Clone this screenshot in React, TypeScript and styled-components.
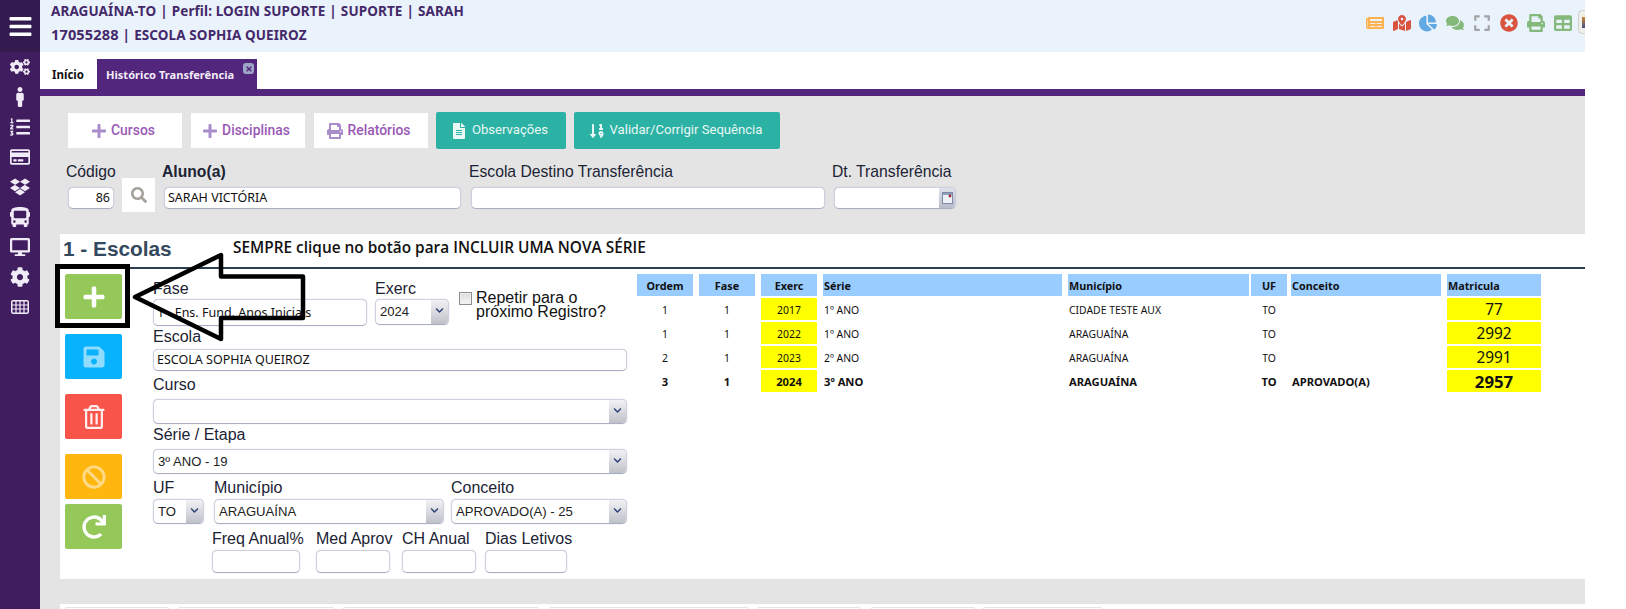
import React from "react";
import styled, { createGlobalStyle } from "styled-components";
import {
  FaBan, FaBars, FaBus, FaChartPie, FaCog, FaCogs, FaComments, FaDesktop, FaDropbox, FaExpand,
  FaFileAlt, FaListOl, FaMale, FaMapMarkedAlt, FaNewspaper, FaPlus, FaPrint, FaRedo, FaRegCreditCard,
  FaRegTrashAlt, FaSave, FaSearch, FaSortNumericDown, FaTable, FaTimes, FaTimesCircle, FaChevronDown,
} from "react-icons/fa";

const Global = createGlobalStyle`
  html, body { margin: 0; padding: 0; background: #fff; overflow: hidden; }
  * { box-sizing: border-box; }
  body { font-family: "Liberation Sans", Arial, sans-serif; }
`;

const Page = styled.div`
  display: flex; width: 1585px; height: 609px; overflow: visible;
`;
const Sidebar = styled.aside`
  width: 40px; flex: none; background: #3f1d5f; display: flex; flex-direction: column; color: #fff;
`;
const MenuTop = styled.div`
  height: 52px; background: #331a4f; display: flex; align-items: center; justify-content: center; font-size: 25px;
`;
const MenuItem = styled.div`
  height: 30px; display: flex; align-items: center; justify-content: center; font-size: 20px; color: #f1ebf7;
`;
const Main = styled.div`
  flex: 1; min-width: 0; display: flex; flex-direction: column;
`;
const Header = styled.header`
  height: 52px; background: #eaf2fb; display: flex; justify-content: space-between; padding-left: 11px;
`;
const HeaderInfo = styled.div`
  font-family: "Noto Sans", sans-serif; font-weight: 700; font-size: 13.5px; line-height: 23px; color: #44296a; letter-spacing: .1px;
`;
const Sep = styled.span`
  margin: 0 4px;
`;
const Digits = styled.span`
  font-size: 14.6px;
`;
const HeaderIcons = styled.div`
  display: flex; align-items: flex-start; overflow: hidden; padding-top: 14px;
`;
const HeadIcon = styled.span<{ $c: string; $w: number }>`
  width: ${p => p.$w}px; flex: none; display: flex; justify-content: center; font-size: 18px; color: ${p => p.$c}; height: 17px; align-items: center;
`;
const Avatar = styled.span`
  width: 7px; height: 24px; margin-top: -4px; flex: none; margin-left: 2px; border: 1px solid #cfcfcf; border-right: 0; border-radius: 5px 0 0 5px; background: #f1efe9; padding: 6px 0 0 3px;
  &::after { content: ""; display: block; width: 4px; height: 11px; background: linear-gradient(#c9852f, #44508a); }
`;
const Tabs = styled.nav`
  height: 37px; background: #fff; padding-top: 7px; display: flex; align-items: stretch;
`;
const HomeTab = styled.div`
  width: 57px; font: 700 11.5px "Noto Sans", sans-serif; color: #111; display: flex; align-items: center; padding-left: 12px;
`;
const ActiveTab = styled.div`
  position: relative; width: 160px; background: #52267d; color: #f3edf8; font: 700 11.1px "Noto Sans", sans-serif; display: flex; align-items: center; padding-left: 9px;
`;
const TabClose = styled.span`
  position: absolute; top: 4px; right: 3px; width: 11px; height: 11px; border-radius: 3px; background: #9da6c6; color: #52267d; font-size: 8px; display: flex; align-items: center; justify-content: center;
`;
const PurpleBar = styled.div` height: 7px; background: #52267d; `;
const Work = styled.main`
  flex: 1; min-height: 0; background: #e4e4e4; padding: 16px 0 0 20px; display: flex; flex-direction: column;
`;
const Toolbar = styled.div`
  display: flex; gap: 9px; align-items: center; margin-left: 8px; height: 37px;
`;
const LightButton = styled.button`
  width: 114px; height: 35px; border: 0; background: #fff; color: #9b59b6; font: 500 13.9px Roboto, sans-serif; display: flex; align-items: center; justify-content: center; gap: 4px; padding: 0 4px 2px 0;
  svg { color: #a98dcb; font-size: 16px; margin-top: 2px; }
`;
const TealButton = styled.button<{ $w: number }>`
  width: ${p => p.$w}px; height: 37px; margin-left: -1px; border: 0; border-radius: 2px; background: #2bb2a4; color: #e9f7f5; font: 400 13.1px Roboto, sans-serif; display: flex; align-items: center; justify-content: center; gap: 5px; padding: 0 3px 2px 0;
  svg { font-size: 16px; margin-top: 2px; }
`;
const TopRow = styled.div`
  display: flex; align-items: flex-start; margin: 13px 0 0 7px; height: 50px;
`;
const Field = styled.div<{ $w: number; $ml?: number }>`
  width: ${p => p.$w}px; margin-left: ${p => p.$ml ?? 0}px; flex: none;
`;
const Label = styled.label<{ $gap?: number; $bold?: boolean }>`
  display: block; height: 18px; line-height: 20px; font-size: 16px; white-space: nowrap; color: #1b2334; font-weight: ${p => (p.$bold ? 700 : 400)}; margin-bottom: ${p => p.$gap ?? 3}px;
`;
const TopLabel = styled(Label)`
  font-size: 15.7px; margin-left: -2px;
`;
const TextBox = styled.div<{ $h?: number; $right?: boolean }>`
  height: ${p => p.$h ?? 22}px; background: #fff; border: 1px solid #ced1dd; border-bottom-color: #aaaec5; border-radius: 5px; box-shadow: 0 0 1px #b0b4ca;
  font: 12.5px/1 "Noto Sans", sans-serif; color: #111; display: flex; align-items: center; padding: 1px 3px 0; white-space: nowrap; overflow: hidden;
  justify-content: ${p => (p.$right ? "flex-end" : "flex-start")};
`;
const DateBox = styled(TextBox)`
  padding: 0; justify-content: flex-end;
`;
const CalCell = styled.span`
  width: 16px; height: 100%; background: linear-gradient(#dfe2ea, #b7bbc9); display: flex; align-items: center; justify-content: center;
`;
const SearchButton = styled.button`
  width: 33px; height: 34px; margin: 16px 0 0 8px; border: 0; background: #fff; color: #a3a09a; font-size: 16px; display: flex; align-items: center; justify-content: center; padding: 0; flex: none;
`;
const Section = styled.section`
  position: relative; margin-top: 22px; height: 345px; background: #fff; flex: none;
`;
const TitleRow = styled.div`
  height: 35px; border-bottom: 2px solid #2c3e50; display: flex; align-items: flex-start; padding: 2px 0 0 3px;
`;
const Title = styled.h2`
  margin: 0; width: 170px; flex: none; font-size: 20.8px; line-height: 26px; font-weight: 700; color: #34495e;
`;
const Note = styled.span`
  font: 600 15.4px/18px "Open Sans", sans-serif; color: #111; margin-top: 3px;
`;
const SectionBody = styled.div`
  display: flex; align-items: flex-start;
`;
const ActionColumn = styled.div`
  margin: 5px 0 0 5px; width: 57px; flex: none; display: flex; flex-direction: column;
`;
const Action = styled.button<{ $c: string; $mt: number; $o: number }>`
  width: 57px; height: 45px; border: 0; padding: 0; margin-top: ${p => p.$mt}px; border-radius: 2px; background: ${p => p.$c}; display: flex; align-items: center; justify-content: center; font-size: 24px;
  color: rgba(255, 255, 255, ${p => p.$o});
`;
const Form = styled.div`
  width: 474px; margin: 10px 0 0 31px; flex: none;
`;
const Row = styled.div<{ $mt?: number; $ml?: number }>`
  display: flex; align-items: flex-start; margin-top: ${p => p.$mt ?? 0}px; margin-left: ${p => p.$ml ?? 0}px;
`;
const SelectBox = styled.div<{ $h?: number }>`
  height: ${p => p.$h ?? 25}px; background: #fff; border: 1px solid #ced1dd; border-bottom-color: #aaaec5; border-radius: 5px; box-shadow: 0 0 1px #b0b4ca; display: flex; overflow: hidden;
`;
const SelectText = styled.span`
  flex: 1; min-width: 0; padding-left: 4px; font-size: 13.1px; line-height: 23px; color: #222; white-space: nowrap; overflow: hidden;
`;
const SelectArrow = styled.span`
  width: 17px; flex: none; background: linear-gradient(#f2f2f5, #bfc1c9); color: #2d3f74; font-size: 9px; display: flex; justify-content: center; padding-top: 6px;
`;
const Check = styled.span`
  width: 13px; height: 13px; margin: 13px 4px 0 10px; flex: none; border: 1px solid #8e8e8e; background: linear-gradient(#dcdcdc, #f5f5f5); box-shadow: inset 0 0 0 1px #eee;
`;
const CheckText = styled.span`
  font-size: 16px; line-height: 14px; margin-top: 12px; width: 150px; color: #111;
`;
const Grid = styled.div`
  margin: 5px 0 0 10px; display: flex; flex-direction: column; gap: 2px;
`;
const GridRow = styled.div<{ $bold?: boolean }>`
  display: flex; height: 22px; font: ${p => (p.$bold ? 700 : 400)} 10.4px "Noto Sans", sans-serif; color: #111;
`;
const Cell = styled.div<{ $w: number; $mr: number; $head?: boolean; $fill?: boolean; $center?: boolean; $size: number }>`
  width: ${p => p.$w}px; margin-right: ${p => p.$mr}px; flex: none; display: flex; align-items: center; white-space: nowrap; padding-left: ${p => (p.$center ? 0 : 1)}px; padding-top: ${p => (p.$head ? 0 : 1)}px;
  justify-content: ${p => (p.$center ? "center" : "flex-start")};
  background: ${p => (p.$head ? "#99ccff" : p.$fill ? "#ffff00" : "transparent")};
  font-weight: ${p => (p.$head ? 700 : "inherit")};
  font-size: ${p => p.$size}px;
`;
const FooterStrip = styled.div`
  flex: 1; margin-top: 25px; background: #fff; padding: 3px 0 0 4px; display: flex; overflow: hidden;
`;
const FooterBox = styled.div<{ $w: number; $ml: number }>`
  width: ${p => p.$w}px; margin-left: ${p => p.$ml}px; height: 12px; border: 1px solid #e4e4e4; border-radius: 3px; flex: none;
`;
const Callout = styled.svg`
  position: absolute; left: -20px; top: 0; pointer-events: none;
`;

const cols = [
  { w: 56, mr: 6, c: true }, { w: 56, mr: 6, c: true }, { w: 56, mr: 6, c: true, f: true }, { w: 239, mr: 6 },
  { w: 181, mr: 2 }, { w: 36, mr: 4, c: true }, { w: 150, mr: 6 }, { w: 94, mr: 0, c: true, f: true, big: true },
];
const heads = ["Ordem", "Fase", "Exerc", "Série", "Município", "UF", "Conceito", "Matricula"];
const rows = [
  ["1", "1", "2017", "1º ANO", "CIDADE TESTE AUX", "TO", "", "77"],
  ["1", "1", "2022", "1º ANO", "ARAGUAÍNA", "TO", "", "2992"],
  ["2", "1", "2023", "2º ANO", "ARAGUAÍNA", "TO", "", "2991"],
  ["3", "1", "2024", "3º ANO", "ARAGUAÍNA", "TO", "APROVADO(A)", "2957"],
];
const footerBoxes: [number, number][] = [[106, 0], [158, 7], [198, 7], [202, 8], [106, 6], [106, 8], [121, 6]];

const Select = ({ text, h }: { text: string; h?: number }) => (
  <SelectBox $h={h}>
    <SelectText>{text}</SelectText>
    <SelectArrow><FaChevronDown /></SelectArrow>
  </SelectBox>
);

const GridIcon = () => (
  <svg width="18" height="14" viewBox="0 0 18 14" fill="none" stroke="currentColor">
    <rect x=".75" y=".75" width="16.5" height="12.5" rx="1.5" strokeWidth="1.5" />
    <path d="M1 5h16M1 9h16M5 1v12M9 1v12M13 1v12" strokeWidth="1.2" />
  </svg>
);

export default function App() {
  const navIcons = [FaCogs, FaMale, FaListOl, FaRegCreditCard, FaDropbox, FaBus, FaDesktop, FaCog, GridIcon];
  return (
    <>
      <Global />
      <Page>
        <Sidebar>
          <MenuTop><FaBars /></MenuTop>
          {navIcons.map((I, i) => <MenuItem key={i}><I /></MenuItem>)}
        </Sidebar>
        <Main>
          <Header>
            <HeaderInfo>
              <div>ARAGUAÍNA-TO<Sep>|</Sep>Perfil: LOGIN SUPORTE<Sep>|</Sep>SUPORTE<Sep>|</Sep>SARAH</div>
              <div><Digits>17055288</Digits><Sep>|</Sep>ESCOLA SOPHIA QUEIROZ</div>
            </HeaderInfo>
            <HeaderIcons>
              <HeadIcon $c="#ffb14d" $w={27}><FaNewspaper /></HeadIcon>
              <HeadIcon $c="#d9533f" $w={27}><FaMapMarkedAlt /></HeadIcon>
              <HeadIcon $c="#62a8e2" $w={26}><FaChartPie /></HeadIcon>
              <HeadIcon $c="#85b97b" $w={27}><FaComments /></HeadIcon>
              <HeadIcon $c="#a3a3a8" $w={27}><FaExpand /></HeadIcon>
              <HeadIcon $c="#d9533f" $w={27}><FaTimesCircle /></HeadIcon>
              <HeadIcon $c="#85b97b" $w={27}><FaPrint /></HeadIcon>
              <HeadIcon $c="#85b97b" $w={27}><FaTable /></HeadIcon>
              <Avatar />
            </HeaderIcons>
          </Header>
          <Tabs>
            <HomeTab>Início</HomeTab>
            <ActiveTab>Histórico Transferência<TabClose><FaTimes /></TabClose></ActiveTab>
          </Tabs>
          <PurpleBar />
          <Work>
            <Toolbar>
              <LightButton><FaPlus />Cursos</LightButton>
              <LightButton><FaPlus />Disciplinas</LightButton>
              <LightButton><FaPrint />Relatórios</LightButton>
              <TealButton $w={130}><FaFileAlt />Observações</TealButton>
              <TealButton $w={206}><FaSortNumericDown />Validar/Corrigir Sequência</TealButton>
            </Toolbar>
            <TopRow>
              <Field $w={46} $ml={1}>
                <TopLabel $gap={7}>Código</TopLabel>
                <TextBox $right>86</TextBox>
              </Field>
              <SearchButton><FaSearch /></SearchButton>
              <Field $w={297} $ml={9}>
                <TopLabel $gap={7} $bold>Aluno(a)</TopLabel>
                <TextBox>SARAH VICTÓRIA</TextBox>
              </Field>
              <Field $w={354} $ml={10}>
                <TopLabel $gap={7}>Escola Destino Transferência</TopLabel>
                <TextBox />
              </Field>
              <Field $w={122} $ml={9}>
                <TopLabel $gap={7}>Dt. Transferência</TopLabel>
                <DateBox>
                  <CalCell>
                    <svg width="11" height="12" viewBox="0 0 11 12">
                      <rect x=".5" y=".5" width="10" height="11" fill="#eef1f7" stroke="#7e8aa6" />
                      <rect x="1" y="1" width="9" height="2" fill="#8fa0bf" />
                      <circle cx="8" cy="4" r="1.4" fill="#a3202a" />
                    </svg>
                  </CalCell>
                </DateBox>
              </Field>
            </TopRow>
            <Section>
              <TitleRow>
                <Title>1 - Escolas</Title>
                <Note>SEMPRE clique no botão para INCLUIR UMA NOVA SÉRIE</Note>
              </TitleRow>
              <SectionBody>
                <ActionColumn>
                  <Action $c="#94c858" $mt={0} $o={1}><FaPlus /></Action>
                  <Action $c="#09b2fd" $mt={15} $o={0.55}><FaSave /></Action>
                  <Action $c="#f9544a" $mt={15} $o={0.9}><FaRegTrashAlt /></Action>
                  <Action $c="#ffb60f" $mt={15} $o={0.5}><FaBan /></Action>
                  <Action $c="#94c858" $mt={5} $o={1}><FaRedo /></Action>
                </ActionColumn>
                <Form>
                  <Row>
                    <Field $w={214}>
                      <Label $gap={2}>Fase</Label>
                      <TextBox $h={27}>1 - Ens. Fund. Anos Iniciais</TextBox>
                    </Field>
                    <Field $w={74} $ml={8}>
                      <Label $gap={2}>Exerc</Label>
                      <Select text="2024" h={26} />
                    </Field>
                    <Check />
                    <CheckText>Repetir para o próximo Registro?</CheckText>
                  </Row>
                  <Row $mt={1}>
                    <Field $w={474}>
                      <Label $gap={4}>Escola</Label>
                      <TextBox>ESCOLA SOPHIA QUEIROZ</TextBox>
                    </Field>
                  </Row>
                  <Row $mt={4}>
                    <Field $w={474}>
                      <Label $gap={6}>Curso</Label>
                      <Select text="" />
                    </Field>
                  </Row>
                  <Row $mt={1}>
                    <Field $w={474}>
                      <Label $gap={6}>Série / Etapa</Label>
                      <Select text="3º ANO - 19" />
                    </Field>
                  </Row>
                  <Row $mt={4}>
                    <Field $w={51}>
                      <Label>UF</Label>
                      <Select text="TO" />
                    </Field>
                    <Field $w={230} $ml={10}>
                      <Label>Município</Label>
                      <Select text="ARAGUAÍNA" />
                    </Field>
                    <Field $w={176} $ml={7}>
                      <Label>Conceito</Label>
                      <Select text="APROVADO(A) - 25" />
                    </Field>
                  </Row>
                  <Row $mt={5} $ml={59}>
                    <Field $w={88}><Label>Freq Anual%</Label><TextBox $h={23} /></Field>
                    <Field $w={74} $ml={16}><Label>Med Aprov</Label><TextBox $h={23} /></Field>
                    <Field $w={74} $ml={12}><Label>CH Anual</Label><TextBox $h={23} /></Field>
                    <Field $w={82} $ml={9}><Label>Dias Letivos</Label><TextBox $h={23} /></Field>
                  </Row>
                </Form>
                <Grid>
                  <GridRow>
                    {heads.map((h, i) => (
                      <Cell key={h} $w={cols[i].w} $mr={cols[i].mr} $head $center={cols[i].c && i < 6} $size={10.8}>{h}</Cell>
                    ))}
                  </GridRow>
                  {rows.map((r, ri) => (
                    <GridRow key={ri} $bold={ri === 3}>
                      {r.map((v, i) => (
                        <Cell key={i} $w={cols[i].w} $mr={cols[i].mr} $center={cols[i].c} $fill={cols[i].f}
                          $size={cols[i].big ? (ri === 3 ? 16.8 : 15.4) : ri === 3 ? 11.2 : 10.4}>{v}</Cell>
                      ))}
                    </GridRow>
                  ))}
                </Grid>
              </SectionBody>
              <Callout width="300" height="120" viewBox="0 0 300 120">
                <rect x="17.5" y="32.5" width="70" height="59" fill="none" stroke="#000" strokeWidth="5" />
                <path d="M95 63 L181 21 V42.5 H263 V84 H181 V105 Z" fill="none" stroke="#000" strokeWidth="4.5" strokeLinejoin="round" />
              </Callout>
            </Section>
            <FooterStrip>
              {footerBoxes.map(([w, ml], i) => <FooterBox key={i} $w={w} $ml={ml} />)}
            </FooterStrip>
          </Work>
        </Main>
      </Page>
    </>
  );
}
